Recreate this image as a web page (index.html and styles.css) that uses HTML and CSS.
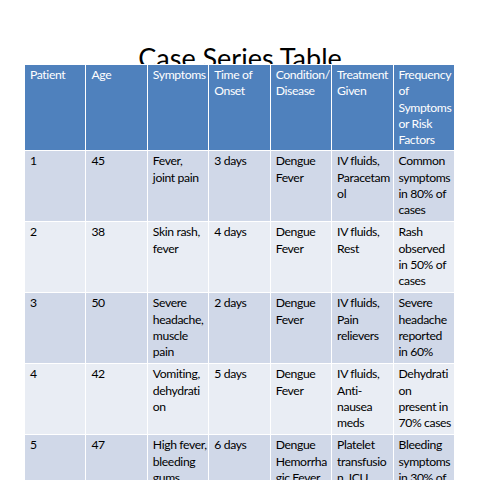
FILE: index.html
```html
<!DOCTYPE html>
<html>
<head>
<meta charset="utf-8">
<link rel="stylesheet" href="styles.css">
</head>
<body>
<div class="slide">
  <h1 class="title">Case Series Table</h1>
  <table class="cases">
    <colgroup>
      <col><col><col><col><col><col><col>
    </colgroup>
    <thead>
      <tr>
        <th>Patient</th>
        <th>Age</th>
        <th>Symptoms</th>
        <th>Time of<br>Onset</th>
        <th>Condition/<br>Disease</th>
        <th>Treatment<br>Given</th>
        <th>Frequency<br>of<br>Symptoms<br>or Risk<br>Factors</th>
      </tr>
    </thead>
    <tbody>
      <tr class="odd">
        <td>1</td><td>45</td><td>Fever,<br>joint pain</td><td>3 days</td><td>Dengue<br>Fever</td><td>IV fluids,<br>Paracetam<br>ol</td><td>Common<br>symptoms<br>in 80% of<br>cases</td>
      </tr>
      <tr class="even">
        <td>2</td><td>38</td><td>Skin rash,<br>fever</td><td>4 days</td><td>Dengue<br>Fever</td><td>IV fluids,<br>Rest</td><td>Rash<br>observed<br>in 50% of<br>cases</td>
      </tr>
      <tr class="odd">
        <td>3</td><td>50</td><td>Severe<br>headache,<br>muscle<br>pain</td><td>2 days</td><td>Dengue<br>Fever</td><td>IV fluids,<br>Pain<br>relievers</td><td>Severe<br>headache<br>reported<br>in 60%</td>
      </tr>
      <tr class="even">
        <td>4</td><td>42</td><td>Vomiting,<br>dehydrati<br>on</td><td>5 days</td><td>Dengue<br>Fever</td><td>IV fluids,<br>Anti-<br>nausea<br>meds</td><td>Dehydrati<br>on<br>present in<br>70% cases</td>
      </tr>
      <tr class="odd">
        <td>5</td><td>47</td><td>High fever,<br>bleeding<br>gums</td><td>6 days</td><td>Dengue<br>Hemorrha<br>gic Fever</td><td>Platelet<br>transfusio<br>n, ICU<br>care</td><td>Bleeding<br>symptoms<br>in 30% of<br>cases</td>
      </tr>
    </tbody>
  </table>
</div>
</body>
</html>
```
FILE: styles.css
```css
html, body {
  margin: 0;
  padding: 0;
  background: #ffffff;
  overflow: hidden;
}
body {
  width: 480px;
  height: 480px;
}
.slide {
  position: relative;
  width: 480px;
  height: 480px;
  padding: 64px 0 0 24px;
  box-sizing: border-box;
  font-family: Lato, "Open Sans", sans-serif;
}
.title {
  position: absolute;
  left: 0;
  right: 0;
  top: 40px;
  margin: 0;
  text-align: center;
  font-weight: normal;
  font-size: 27px;
  line-height: 36px;
  color: #000000;
}
.cases {
  position: relative;
  width: 431px;
  table-layout: fixed;
  border-collapse: collapse;
  font-size: 12.2px;
  letter-spacing: -0.38px;
  line-height: 16.25px;
}
.cases th, .cases td {
  border: 1px solid #ffffff;
  padding: 2px 2px 2px 5px;
  vertical-align: top;
  text-align: left;
  white-space: nowrap;
  overflow: hidden;
}
.cases th {
  background: #4f81bd;
  color: #ffffff;
  font-weight: normal;
  height: 80.5px;
}
.cases td {
  color: #000000;
  height: 66px;
}
.cases tr.odd td {
  background: #d0d8e8;
}
.cases tr.even td {
  background: #e9edf4;
}
```
